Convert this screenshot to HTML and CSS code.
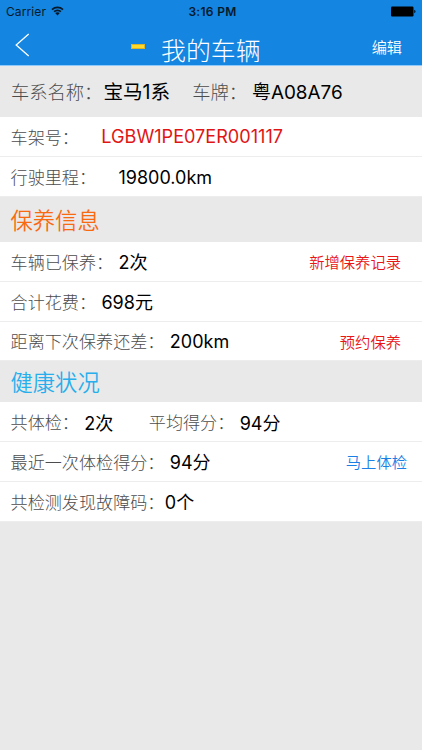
FILE: index.html
```
<!DOCTYPE html>
<html lang="zh-CN">
<head>
    <meta charset="UTF-8">
    <meta name="viewport" content="width=device-width, initial-scale=1.0">
    <title>我的车辆</title>
    <link rel="stylesheet" href="styles.css">
</head>
<body>
    <div class="header">
        <div class="status-bar">
            <div class="carrier">
                <span>Carrier</span>
                <svg class="wifi" viewBox="0 0 13 10" width="13" height="10">
                    <path d="M1 3.6C4 .6 9 .6 12 3.6M3.1 5.7c1.9-1.9 4.9-1.9 6.8 0" fill="none" stroke="#061a2c" stroke-width="1.7"/>
                    <path d="M4.2 7.1c1.2-1.3 3.4-1.3 4.6 0L6.5 9.5z" fill="#061a2c"/>
                </svg>
            </div>
            <span class="clock">3:16 PM</span>
            <svg class="battery" viewBox="0 0 25 11" width="25" height="11">
                <rect x="0" y="0.5" width="22.5" height="10" rx="1.2"/>
                <path d="M23.3 3.8c1.6.4 1.6 3 0 3.4z"/>
            </svg>
        </div>
        <div class="nav-bar">
            <svg class="back" viewBox="0 0 15 24" width="15" height="24">
                <path d="M13.7 1L1.2 12l12.5 11" fill="none" stroke="#fff" stroke-width="1.3"/>
            </svg>
            <div class="title">
                <span class="brand-mark"></span>
                <h1>我的车辆</h1>
            </div>
            <a class="edit">编辑</a>
        </div>
    </div>

    <div class="car-name">
        <span class="label">车系名称：</span>
        <span class="value">宝马1系</span>
        <span class="label plate">车牌：</span>
        <span class="value plate-number">粤A08A76</span>
    </div>
    <div class="row">
        <span class="label">车架号：</span>
        <span class="value wide vin">LGBW1PE07ER001117</span>
    </div>
    <div class="row">
        <span class="label">行驶里程：</span>
        <span class="value wide latin">19800.0km</span>
    </div>

    <h2 class="section maintain">保养信息</h2>
    <div class="row">
        <span class="label">车辆已保养：</span>
        <span class="value">2次</span>
        <a class="action">新增保养记录</a>
    </div>
    <div class="row">
        <span class="label">合计花费：</span>
        <span class="value">698元</span>
    </div>
    <div class="row">
        <span class="label">距离下次保养还差：</span>
        <span class="value latin">200km</span>
        <a class="action">预约保养</a>
    </div>

    <h2 class="section health">健康状况</h2>
    <div class="row">
        <span class="label">共体检：</span>
        <span class="value">2次</span>
        <span class="label average">平均得分：</span>
        <span class="value">94分</span>
    </div>
    <div class="row">
        <span class="label">最近一次体检得分：</span>
        <span class="value">94分</span>
        <a class="action check">马上体检</a>
    </div>
    <div class="row">
        <span class="label">共检测发现故障码：</span>
        <span class="value tight">0个</span>
    </div>
</body>
</html>
```

FILE: styles.css
```
* {
    box-sizing: border-box;
}
body {
    margin: 0;
    min-height: 750px;
    background-color: #e9e9e9;
    font-family: Inter, "Noto Sans CJK SC", sans-serif;
    color: #000;
    white-space: nowrap;
}
h1, h2 {
    margin: 0;
    font-weight: 300;
}
.header {
    height: 66px;
    background-color: #1485e1;
    border-bottom: 1px solid #8dc9fb;
}
.status-bar {
    display: grid;
    grid-template-columns: 1fr auto 1fr;
    align-items: center;
    height: 22px;
    padding: 0 6px;
    font-size: 12px;
    color: #061a2c;
}
.carrier {
    display: flex;
    align-items: center;
    gap: 5px;
    letter-spacing: 0.1px;
}
.clock {
    margin-left: 3px;
    font-weight: 600;
    letter-spacing: 0.3px;
}
.battery {
    justify-self: end;
}
.nav-bar {
    display: flex;
    align-items: center;
    height: 43px;
    padding: 0 20px 0 15px;
    color: #fff;
}
.back {
    margin-top: 3px;
}
.title {
    display: flex;
    align-items: center;
    gap: 16px;
    margin-left: 101px;
}
.title h1 {
    margin-top: 15px;
    font-size: 24.9px;
    line-height: 30px;
}
.brand-mark {
    width: 14px;
    height: 5px;
    margin-top: 5px;
    background-color: #ffda2b;
    border: 1px solid #d8b52f;
}
.edit {
    margin: 4px 0 0 auto;
    font-size: 15.2px;
    font-weight: 350;
}
.car-name {
    display: flex;
    align-items: center;
    height: 51px;
    padding: 0 0 2px 11px;
    font-size: 18.3px;
}
.car-name .value {
    margin-left: 1px;
    font-size: 19.6px;
}
.car-name .plate-number {
    margin-left: 5px;
    font-size: 18.9px;
}
.plate {
    margin-left: 22px;
}
.label {
    color: #4c4c4c;
    font-weight: 300;
}
.row {
    display: flex;
    align-items: center;
    height: 39.75px;
    padding: 0 21px 0 10.6px;
    background-color: #fff;
    border-bottom: 1px solid #ededed;
    font-size: 17.1px;
}
.row .value {
    margin-left: 5.4px;
    font-size: 18px;
}
.row .wide {
    margin-left: 22.4px;
}
.row .tight {
    margin-left: 0.4px;
}
.row .vin {
    font-size: 18.1px;
    color: #e01515;
}
.row .latin {
    padding-top: 2px;
}
.row .average {
    margin-left: 35.5px;
}
.action {
    margin-left: auto;
    font-size: 15.3px;
    font-weight: 350;
    color: #e81717;
}
.check {
    margin-right: -6px;
    color: #1a80e6;
}
.section {
    height: 45.5px;
    padding: 3px 10.5px 0;
    font-size: 22.3px;
    font-weight: 350;
    line-height: 42px;
}
.maintain {
    color: #f96a10;
}
.health {
    height: 41px;
    padding-top: 1px;
    color: #27aeec;
}
```
